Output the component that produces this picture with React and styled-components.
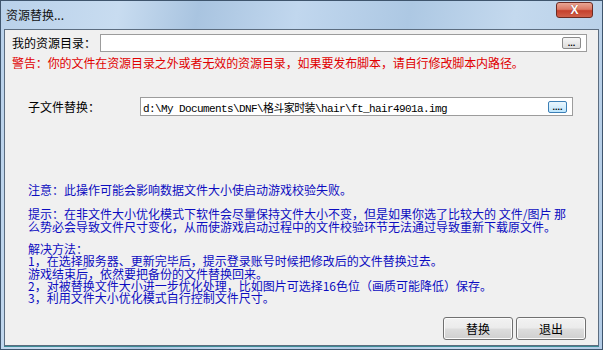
import React from 'react';
import styled, { createGlobalStyle } from 'styled-components';

const GlobalStyle = createGlobalStyle`
    html, body {
        margin: 0;
        padding: 0;
        background: #ffffff;
    }
    body {
        font-family: "Noto Sans CJK SC", "Liberation Sans", sans-serif;
        font-size: 12px;
    }
`;

const Window = styled.div`
    width: 603px;
    height: 350px;
    box-sizing: border-box;
    border: 1px solid #3f556d;
    background: linear-gradient(100deg, #b9d1ea 0%, #c8dcf0 18%, #a9c4e0 30%, #c1d7ee 45%, #adc8e3 62%, #c4d9ee 78%, #b3cce6 100%);
    display: flex;
    flex-direction: column;
    overflow: hidden;
`;

const TitleBar = styled.div`
    height: 28px;
    flex: none;
    display: flex;
    align-items: flex-start;
    justify-content: space-between;
    padding: 0 9px 0 5px;
`;

const Title = styled.div`
    margin-top: 7px;
    font-size: 12px;
    line-height: 14px;
    color: #111;
`;

const CloseButton = styled.div`
    width: 37px;
    height: 16px;
    margin-top: 1px;
    box-sizing: border-box;
    border: 1px solid #6b2a22;
    border-radius: 3px;
    background: linear-gradient(#e9a593 0%, #dc7a66 45%, #c5402c 55%, #d0604a 100%);
    display: flex;
    align-items: center;
    justify-content: center;
    color: #fff;
    font-family: "Liberation Sans", sans-serif;
    font-weight: bold;
    font-size: 12px;
    line-height: 12px;
    text-shadow: 0 0 1px #7a2016;
`;

const Client = styled.div`
    flex: 1;
    margin: 0 3px 3px 3px;
    border: 1px solid #5c6d80;
    background: #f0f0f0;
    display: flex;
    flex-direction: column;
    padding: 4px 11px 5px 7px;
    box-shadow: 0 1px 0 #3c8a94;
`;

const Row = styled.div`
    display: flex;
    align-items: center;
    padding-left: ${p => p.$indent || 0}px;
    padding-right: ${p => p.$right || 0}px;
    margin-top: ${p => p.$top || 0}px;
`;

const Label = styled.div`
    width: ${p => p.$width}px;
    flex: none;
    color: #000;
    line-height: 14px;
`;

const PathBox = styled.div`
    flex: 1;
    height: ${p => p.$height}px;
    box-sizing: border-box;
    border: 1px solid #9c9c9c;
    background: #fff;
    display: flex;
    align-items: center;
    justify-content: space-between;
    padding: 0 5px 0 2px;
    font-family: "Liberation Mono", "Noto Sans CJK SC", monospace;
    font-size: 11px;
    letter-spacing: -0.6px;
    color: #000;
`;

const BrowseButton = styled.div`
    width: 19px;
    height: 12px;
    box-sizing: border-box;
    border: 1px solid ${p => p.$focus ? '#3b7fb6' : '#8a8a8a'};
    border-radius: 2px;
    background: ${p => p.$focus
        ? 'linear-gradient(#eaf6fd, #bee6fd)'
        : 'linear-gradient(#f6f6f6, #dcdcdc)'};
    display: flex;
    align-items: center;
    justify-content: center;
    font-family: "Liberation Sans", sans-serif;
    font-weight: bold;
    font-size: 9px;
    line-height: 8px;
    letter-spacing: 0;
    color: #000;
`;

const Warning = styled.div`
    margin-top: 4px;
    color: #e00000;
    line-height: 14px;
    letter-spacing: -0.1px;
`;

const Notes = styled.div`
    margin-top: 67px;
    padding-left: 16px;
    color: #0c0cc0;
`;

const Para = styled.div`
    margin-top: ${p => p.$top || 0}px;
    line-height: ${p => p.$lh || 13}px;
    white-space: pre;
`;

const ButtonBar = styled.div`
    margin-top: auto;
    display: flex;
    justify-content: flex-end;
    gap: 3px;
    padding-right: 1px;
`;

const Button = styled.div`
    width: 70px;
    height: 23px;
    box-sizing: border-box;
    border: 1px solid #707070;
    border-radius: 3px;
    background: linear-gradient(#f2f2f2 0%, #ebebeb 48%, #dddddd 52%, #cfcfcf 100%);
    box-shadow: inset 0 0 0 1px #fcfcfc;
    display: flex;
    align-items: center;
    justify-content: center;
    color: #000;
`;

const App = () => (
    <>
        <GlobalStyle />
        <Window>
            <TitleBar>
                <Title>资源替换...</Title>
                <CloseButton>X</CloseButton>
            </TitleBar>
            <Client>
                <Row>
                    <Label $width={88}>我的资源目录：</Label>
                    <PathBox $height={18}>
                        <span />
                        <BrowseButton>...</BrowseButton>
                    </PathBox>
                </Row>
                <Warning>警告：你的文件在资源目录之外或者无效的资源目录，如果要发布脚本，请自行修改脚本内路径。</Warning>
                <Row $indent={16} $right={14} $top={27}>
                    <Label $width={112}>子文件替换：</Label>
                    <PathBox $height={19}>
                        <span>d:\My Documents\DNF\格斗家时装\hair\ft_hair4901a.img</span>
                        <BrowseButton $focus>....</BrowseButton>
                    </PathBox>
                </Row>
                <Notes>
                    <Para>注意：此操作可能会影响数据文件大小使启动游戏校验失败。</Para>
                    <Para $top={11}>
                        {'提示：在非文件大小优化模式下软件会尽量保持文件大小不变，但是如果你选了比较大的 文件/图片 那\n么势必会导致文件尺寸变化，从而使游戏启动过程中的文件校验环节无法通过导致重新下载原文件。'}
                    </Para>
                    <Para $top={10} $lh={12.3}>
                        {'解决方法：\n1，在选择服务器、更新完毕后，提示登录账号时候把修改后的文件替换过去。\n游戏结束后，依然要把备份的文件替换回来。\n2，对被替换文件大小进一步优化处理，比如图片可选择16色位（画质可能降低）保存。\n3，利用文件大小优化模式自行控制文件尺寸。'}
                    </Para>
                </Notes>
                <ButtonBar>
                    <Button>替换</Button>
                    <Button>退出</Button>
                </ButtonBar>
            </Client>
        </Window>
    </>
);

export default App;
